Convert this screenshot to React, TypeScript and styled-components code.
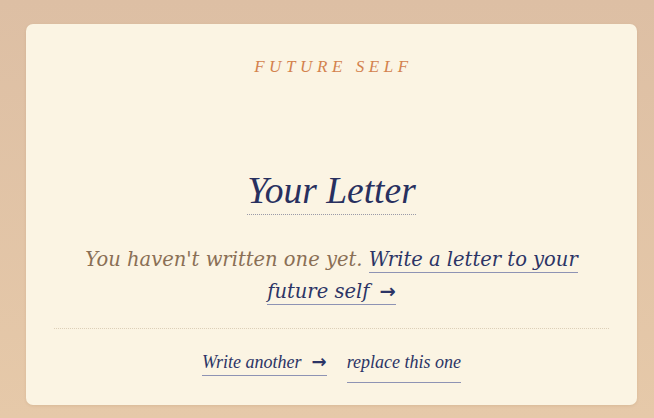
import React from "react";
import styled, { createGlobalStyle } from "styled-components";

const Global = createGlobalStyle`
  html, body { margin: 0; padding: 0; }
  body {
    min-height: 418px;
    background: linear-gradient(180deg, #DDBFA4 0%, #E6C9A9 100%);
    font-family: "Liberation Serif", serif;
  }
`;

const Page = styled.div`
  padding: 24px 17px 13px 26px;
`;

const Card = styled.section`
  background: #FBF4E3;
  border-radius: 7px;
  box-shadow: 0 1px 3px rgba(120, 80, 40, 0.12);
  padding: 0 28px 23px;
  display: flex;
  flex-direction: column;
  align-items: center;
  height: 381px;
  box-sizing: border-box;
`;

const Eyebrow = styled.div`
  margin-top: 33px;
  font-family: "Liberation Serif", serif;
  font-style: italic;
  font-size: 17px;
  letter-spacing: 4.6px;
  color: #D3824E;
  line-height: 20px;
  padding-left: 4px;
`;

const Title = styled.h1`
  margin: 93px 0 0;
  font-family: "Liberation Serif", serif;
  font-style: italic;
  font-weight: 400;
  font-size: 37.5px;
  line-height: 42px;
  color: #28305F;
  padding-bottom: 2px;
  border-bottom: 1px dotted #9A9AA8;
`;

const Lede = styled.p`
  margin: 29px 0 0;
  font-family: "DejaVu Serif", serif;
  font-style: italic;
  font-size: 19.5px;
  line-height: 32px;
  color: #8A6F55;
  text-align: center;
  max-width: 540px;
`;

const InlineLink = styled.a`
  color: #2C3466;
  text-decoration: none;
  border-bottom: 1px solid #8E93B4;
  padding-bottom: 1px;
`;

const Divider = styled.hr`
  align-self: stretch;
  margin: 20px 0 0;
  border: 0;
  border-top: 1px dotted #DCCFB8;
`;

const Actions = styled.div`
  margin-top: 21px;
  display: flex;
  align-items: flex-start;
  gap: 20px;
`;

const ActionLink = styled.a<{ $drop?: number }>`
  font-family: "Liberation Serif", serif;
  font-style: italic;
  font-size: 18px;
  line-height: 24px;
  color: #2C3466;
  text-decoration: none;
  border-bottom: 1px solid #8E93B4;
  padding-bottom: ${(p) => p.$drop ?? 0}px;
`;

const Arrow = styled.span<{ $gap?: number }>`
  font-family: "DejaVu Sans", sans-serif;
  font-style: normal;
  font-weight: 700;
  margin-left: ${(p) => p.$gap ?? 6}px;
`;

export default function App() {
  return (
    <>
      <Global />
      <Page>
        <Card>
          <Eyebrow>FUTURE SELF</Eyebrow>
          <Title>Your Letter</Title>
          <Lede>
            You haven't written one yet.{" "}
            <InlineLink href="#">
              Write a letter to your future self<Arrow $gap={10}>→</Arrow>
            </InlineLink>
          </Lede>
          <Divider />
          <Actions>
            <ActionLink href="#" $drop={1}>
              Write another<Arrow $gap={10}>→</Arrow>
            </ActionLink>
            <ActionLink href="#" $drop={8}>
              replace this one
            </ActionLink>
          </Actions>
        </Card>
      </Page>
    </>
  );
}
